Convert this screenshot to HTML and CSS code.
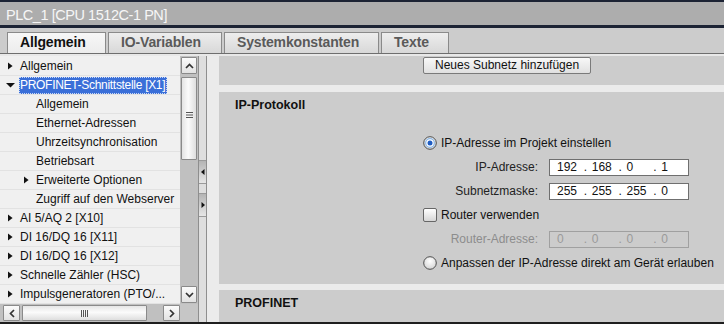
FILE: index.html
```html
<!DOCTYPE html>
<html lang="de">
<head>
<meta charset="utf-8">
<title>PLC_1 Eigenschaften</title>
<link rel="stylesheet" href="styles.css">
</head>
<body>
<div class="titlebar">PLC_1 [CPU 1512C-1 PN]</div>
<div class="tabs">
  <div class="tab t1 active">Allgemein</div>
  <div class="tab t2">IO-Variablen</div>
  <div class="tab t3">Systemkonstanten</div>
  <div class="tab t4">Texte</div>
</div>
<div class="main">
  <div class="left">
    <div class="treewrap">
      <div class="tree">
        <div class="row l0"><span class="tw"><svg width="5" height="8" viewBox="0 0 5 8"><polygon points="0,0.5 4.6,4 0,7.5" fill="#111"/></svg></span><span class="txt">Allgemein</span></div>
        <div class="row l0"><span class="tw"><svg width="9" height="5" viewBox="0 0 9 5"><polygon points="0,0 9,0 4.5,4.6" fill="#111"/></svg></span><span class="txt sel">PROFINET-Schnittstelle [X1]</span></div>
        <div class="row l1"><span class="tw"></span><span class="txt">Allgemein</span></div>
        <div class="row l1"><span class="tw"></span><span class="txt">Ethernet-Adressen</span></div>
        <div class="row l1"><span class="tw"></span><span class="txt">Uhrzeitsynchronisation</span></div>
        <div class="row l1"><span class="tw"></span><span class="txt">Betriebsart</span></div>
        <div class="row l1"><span class="tw"><svg width="5" height="8" viewBox="0 0 5 8"><polygon points="0,0.5 4.6,4 0,7.5" fill="#111"/></svg></span><span class="txt">Erweiterte Optionen</span></div>
        <div class="row l1"><span class="tw"></span><span class="txt">Zugriff auf den Webserver</span></div>
        <div class="row l0"><span class="tw"><svg width="5" height="8" viewBox="0 0 5 8"><polygon points="0,0.5 4.6,4 0,7.5" fill="#111"/></svg></span><span class="txt">AI 5/AQ 2 [X10]</span></div>
        <div class="row l0"><span class="tw"><svg width="5" height="8" viewBox="0 0 5 8"><polygon points="0,0.5 4.6,4 0,7.5" fill="#111"/></svg></span><span class="txt">DI 16/DQ 16 [X11]</span></div>
        <div class="row l0"><span class="tw"><svg width="5" height="8" viewBox="0 0 5 8"><polygon points="0,0.5 4.6,4 0,7.5" fill="#111"/></svg></span><span class="txt">DI 16/DQ 16 [X12]</span></div>
        <div class="row l0"><span class="tw"><svg width="5" height="8" viewBox="0 0 5 8"><polygon points="0,0.5 4.6,4 0,7.5" fill="#111"/></svg></span><span class="txt">Schnelle Zähler (HSC)</span></div>
        <div class="row l0"><span class="tw"><svg width="5" height="8" viewBox="0 0 5 8"><polygon points="0,0.5 4.6,4 0,7.5" fill="#111"/></svg></span><span class="txt">Impulsgeneratoren (PTO/...</span></div>
      </div>
      <div class="vscroll">
        <div class="sbbtn vbtn"><svg width="9" height="6" viewBox="0 0 9 6"><polyline points="1,5 4.5,1.5 8,5" fill="none" stroke="#333" stroke-width="1.7"/></svg></div>
        <div class="vthumb"><svg width="7" height="6" viewBox="0 0 7 6"><rect x="0" y="0" width="7" height="1" fill="#555"/><rect x="0" y="2.5" width="7" height="1" fill="#555"/><rect x="0" y="5" width="7" height="1" fill="#555"/></svg></div>
        <div class="vtrack"></div>
        <div class="sbbtn vbtn"><svg width="9" height="6" viewBox="0 0 9 6"><polyline points="1,1 4.5,4.5 8,1" fill="none" stroke="#333" stroke-width="1.7"/></svg></div>
      </div>
    </div>
    <div class="hscroll">
      <div class="sbbtn hbtn"><svg width="6" height="9" viewBox="0 0 6 9"><polyline points="5,1 1.5,4.5 5,8" fill="none" stroke="#333" stroke-width="1.7"/></svg></div>
      <div class="hthumb"><svg width="7" height="7" viewBox="0 0 7 7"><rect x="0" y="0" width="1" height="7" fill="#555"/><rect x="2" y="0" width="1" height="7" fill="#555"/><rect x="4" y="0" width="1" height="7" fill="#555"/><rect x="6" y="0" width="1" height="7" fill="#555"/></svg></div>
      <div class="htrack"></div>
      <div class="sbbtn hbtn"><svg width="6" height="9" viewBox="0 0 6 9"><polyline points="1,1 4.5,4.5 1,8" fill="none" stroke="#333" stroke-width="1.7"/></svg></div>
      <div class="corner"></div>
    </div>
  </div>
  <div class="splitter">
    <div class="spbtn"><svg width="4" height="6" viewBox="0 0 4 6"><polygon points="3.5,0 0,3 3.5,6" fill="#111"/></svg></div>
    <div class="spbtn"><svg width="4" height="6" viewBox="0 0 4 6"><polygon points="0.5,0 4,3 0.5,6" fill="#111"/></svg></div>
  </div>
  <div class="right">
    <div class="sec s1"><div class="btn">Neues Subnetz hinzufügen</div></div>
    <div class="sec s2">
      <div class="sec-title">IP-Protokoll</div>
      <div class="form">
        <div class="frow">
          <svg class="radio" width="14" height="14" viewBox="0 0 14 14"><defs><radialGradient id="rg1" cx="50%" cy="35%" r="65%"><stop offset="0" stop-color="#ffffff"/><stop offset="1" stop-color="#d4d4d4"/></radialGradient></defs><circle cx="7" cy="7" r="6.3" fill="url(#rg1)" stroke="#4e4e4e" stroke-width="1"/><circle cx="7" cy="7" r="4.3" fill="#ffffff" stroke="#8ab6e6" stroke-width="1.2"/><circle cx="7" cy="7" r="2.5" fill="#1e5cc2"/></svg>
          <span class="opt">IP-Adresse im Projekt einstellen</span>
        </div>
        <div class="frow">
          <span class="lbl">IP-Adresse:</span>
          <div class="ip"><span class="oct">192</span><span class="dot">.</span><span class="oct">168</span><span class="dot">.</span><span class="oct">0</span><span class="dot">.</span><span class="oct">1</span></div>
        </div>
        <div class="frow">
          <span class="lbl">Subnetzmaske:</span>
          <div class="ip"><span class="oct">255</span><span class="dot">.</span><span class="oct">255</span><span class="dot">.</span><span class="oct">255</span><span class="dot">.</span><span class="oct">0</span></div>
        </div>
        <div class="frow">
          <span class="chk"></span>
          <span class="opt">Router verwenden</span>
        </div>
        <div class="frow">
          <span class="lbl dis">Router-Adresse:</span>
          <div class="ip dis"><span class="oct">0</span><span class="dot">.</span><span class="oct">0</span><span class="dot">.</span><span class="oct">0</span><span class="dot">.</span><span class="oct">0</span></div>
        </div>
        <div class="frow">
          <svg class="radio" width="14" height="14" viewBox="0 0 14 14"><defs><radialGradient id="rg2" cx="50%" cy="35%" r="65%"><stop offset="0" stop-color="#ffffff"/><stop offset="1" stop-color="#d4d4d4"/></radialGradient></defs><circle cx="7" cy="7" r="6.3" fill="url(#rg2)" stroke="#4e4e4e" stroke-width="1"/></svg>
          <span class="opt">Anpassen der IP-Adresse direkt am Gerät erlauben</span>
        </div>
      </div>
    </div>
    <div class="sec s3">
      <div class="sec-title">PROFINET</div>
    </div>
  </div>
</div>
</body>
</html>
```
FILE: styles.css
```css
* { box-sizing: border-box; }
html, body { margin: 0; padding: 0; }
body {
  width: 724px;
  height: 324px;
  overflow: hidden;
  background: #cccccc;
  font-family: "Liberation Sans", Arial, sans-serif;
  font-size: 12px;
  color: #111111;
}

.titlebar {
  height: 28px;
  border-top: 2px solid #1c2334;
  border-bottom: 3px solid #1c2334;
  background: #adadad;
  color: #f6f6f6;
  font-size: 14.5px;
  letter-spacing: -0.45px;
  line-height: 20px;
  padding: 3px 0 0 6px;
  white-space: nowrap;
}

.tabs {
  height: 26px;
  display: flex;
  align-items: flex-end;
  gap: 2px;
  padding-left: 7px;
  border-bottom: 1px solid #6e6e6e;
  background: #cccccc;
}
.tab {
  height: 21px;
  border: 1px solid #8a8a8a;
  border-bottom: none;
  padding-left: 12px;
  font-size: 14px;
  font-weight: bold;
  letter-spacing: -0.15px;
  line-height: 19px;
  color: #5a5a5a;
  background: linear-gradient(#ededed, #d8d8d8);
  white-space: nowrap;
}
.tab.active { color: #111111; background: linear-gradient(#f7f7f7, #ececec); }
.t1 { width: 99px; }
.t2 { width: 114px; }
.t3 { width: 155px; }
.t4 { width: 68px; }

.main {
  display: flex;
  height: 270px;
  border-top: 2px solid #e8e8e8;
  border-bottom: 2px solid #1e1e1e;
}

.left { width: 198px; display: flex; flex-direction: column; }
.treewrap { display: flex; height: 248px; }
.tree { width: 180px; background: #f0f0f0; padding-top: 1px; overflow: hidden; }
.row {
  height: 19px;
  border-bottom: 1px solid #e2e2e2;
  display: flex;
  align-items: center;
  white-space: nowrap;
}
.row.l0 { padding-left: 4px; }
.row.l1 { padding-left: 20px; }
.tw { width: 12px; display: flex; align-items: center; justify-content: center; margin-right: 4px; flex: none; }
.txt { line-height: 15px; }
.txt.sel {
  margin-left: -1px;
  padding-right: 1px;
  letter-spacing: -0.3px;
  background: #3a6fd8;
  color: #ffffff;
  border: 1px dotted #c9d8f5;
}

.vscroll {
  width: 18px;
  background: #c0c0c0;
  display: flex;
  flex-direction: column;
  padding: 1px 1px 1px 1px;
}
.sbbtn {
  border: 1px solid #8a8a8a;
  border-radius: 1px;
  background: linear-gradient(#fbfbfb, #e2e2e2);
  display: flex;
  align-items: center;
  justify-content: center;
  flex: none;
}
.vbtn { height: 17px; }
.vthumb {
  margin-top: 3px;
  height: 83px;
  border: 1px solid #8a8a8a;
  border-radius: 1px;
  background: linear-gradient(to right, #e4e4e4, #fbfbfb 45%, #dedede);
  display: flex;
  align-items: center;
  justify-content: center;
  padding-bottom: 8px;
}
.vtrack { flex: 1; }

.hscroll {
  height: 18px;
  display: flex;
  align-items: center;
  background: #c0c0c0;
  padding-left: 3px;
}
.hbtn { width: 17px; height: 16px; }
.hthumb {
  margin-left: 2px;
  width: 125px;
  height: 16px;
  border: 1px solid #8a8a8a;
  border-radius: 1px;
  background: linear-gradient(#e6e6e6, #fbfbfb 45%, #dedede);
  display: flex;
  align-items: center;
  justify-content: center;
}
.htrack { flex: 1; }
.corner { width: 18px; height: 18px; background: #c6c6c6; }

.splitter {
  width: 9px;
  border-left: 1px solid #8e8e8e;
  border-right: 1px solid #8e8e8e;
  background: #dedede;
  display: flex;
  flex-direction: column;
  padding-top: 104px;
  gap: 9px;
}
.spbtn {
  height: 24px;
  background: linear-gradient(#b4b4b4, #e6e6e6);
  border-top: 1px solid #9a9a9a;
  border-bottom: 1px solid #9a9a9a;
  display: flex;
  align-items: center;
  justify-content: center;
}

.right {
  flex: 1;
  background: #ebebeb;
  padding-left: 12px;
  display: flex;
  flex-direction: column;
}
.sec { background: #cccccc; }
.s1 { height: 29px; padding: 1px 0 0 204px; }
.s2 { margin-top: 7px; height: 192px; }
.s3 { margin-top: 6px; flex: 1; }
.sec-title {
  padding: 5px 16px 0;
  font-size: 12.5px;
  font-weight: bold;
  line-height: 16px;
  color: #111111;
}

.btn {
  display: inline-block;
  height: 17px;
  padding: 0 11px;
  border: 1px solid #7a7a7a;
  border-radius: 2px;
  background: linear-gradient(#f8f8f8, #e0e0e0);
  line-height: 15px;
  color: #111111;
  white-space: nowrap;
}

.form { margin: 18px 0 0 204px; }
.frow { height: 24px; display: flex; align-items: center; white-space: nowrap; }
.radio { flex: none; }
.opt { margin-left: 4px; }
.chk {
  width: 14px;
  height: 14px;
  border: 1px solid #666666;
  border-radius: 2px;
  background: linear-gradient(#ffffff, #d6d6d6);
  flex: none;
}
.lbl { width: 115px; text-align: right; color: #222222; }
.lbl.dis { color: #8d8d8d; }
.ip {
  margin-left: 11px;
  width: 140px;
  height: 17px;
  border: 1px solid #6f6f6f;
  background: #ffffff;
  display: flex;
  align-items: center;
  padding-left: 7px;
  line-height: 15px;
  color: #111111;
}
.ip.dis { background: transparent; border-color: #a0a0a0; color: #9a9a9a; }
.oct { width: 27px; }
.dot { width: 8px; }
```
